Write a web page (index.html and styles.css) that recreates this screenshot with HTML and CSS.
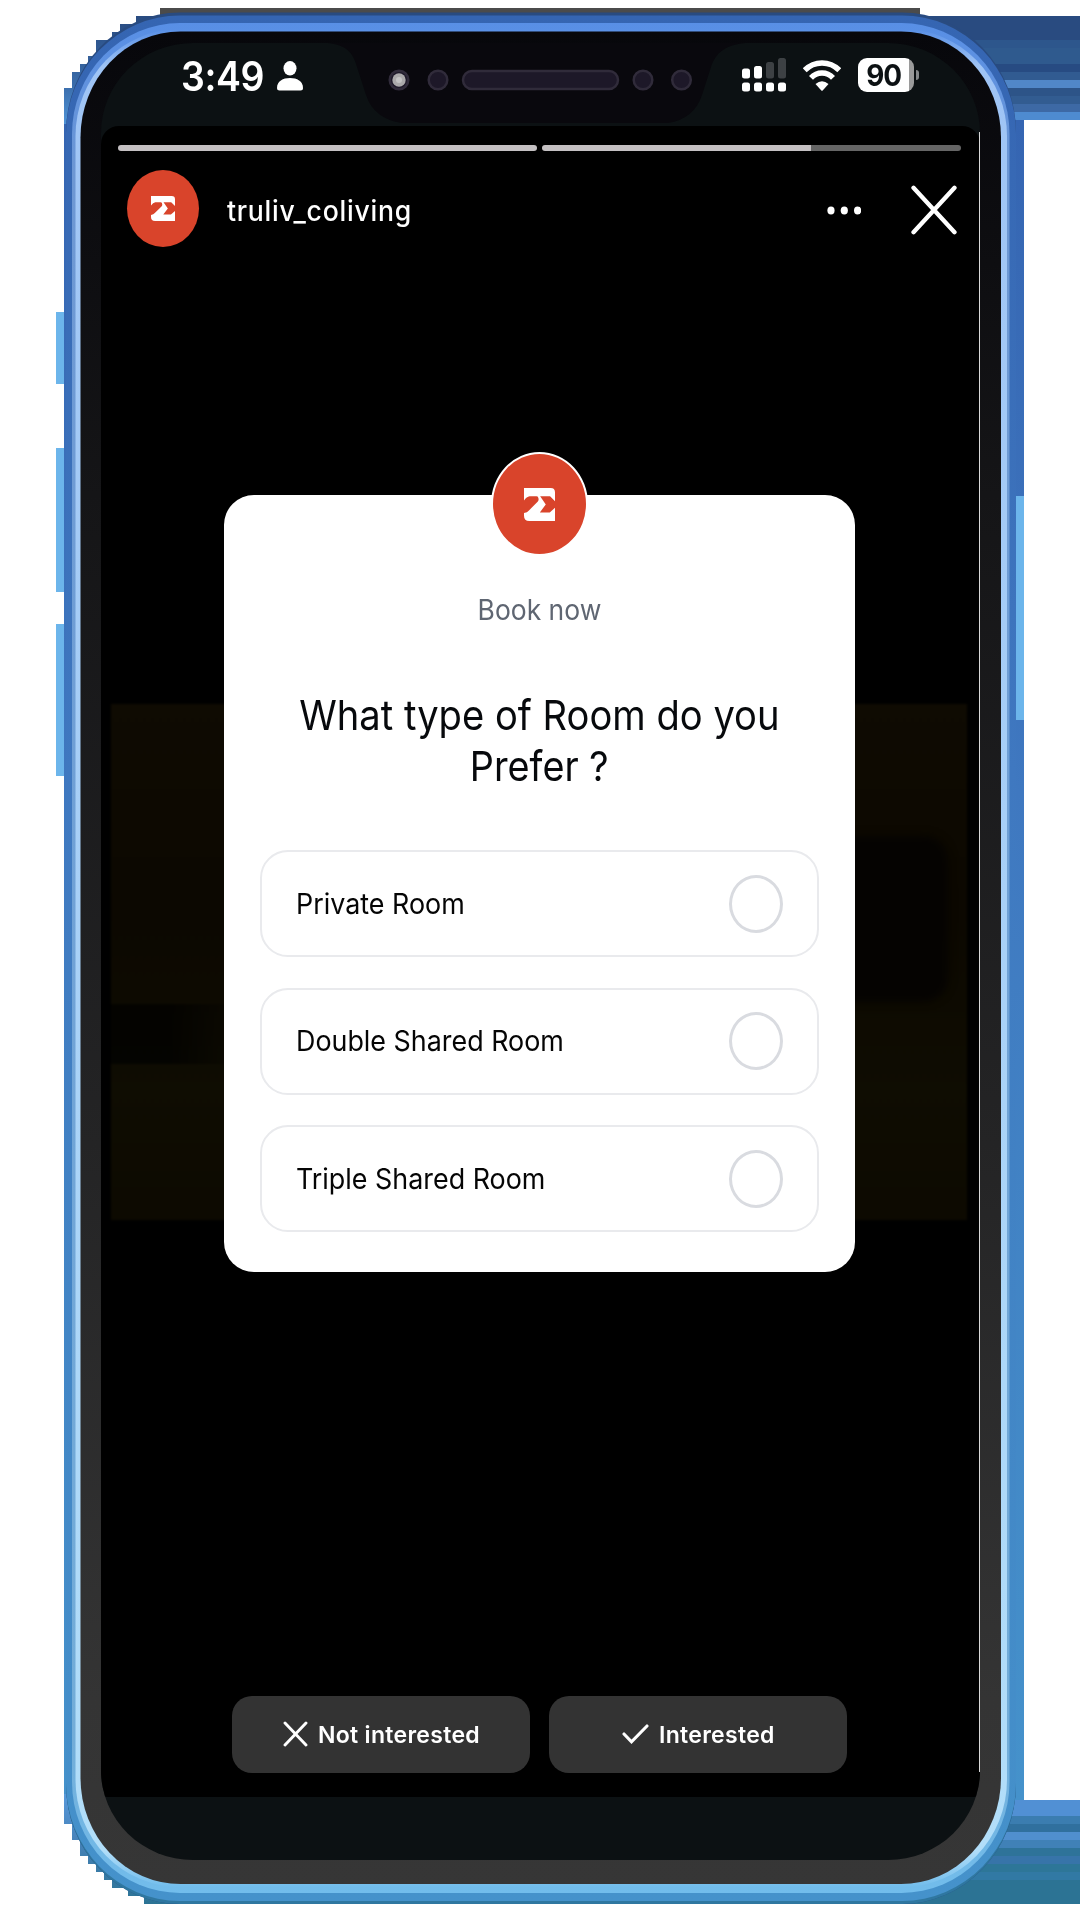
FILE: index.html
```html
<!DOCTYPE html>
<html lang="en">
<head>
<meta charset="utf-8">
<title>truliv_coliving story</title>
<link rel="stylesheet" href="styles.css">
</head>
<body>
<svg width="0" height="0" class="defs">
  <symbol id="mark" viewBox="0 0 94 100" preserveAspectRatio="none">
    <path d="M0 0H81Q94 0 94 13V40L79 25H49L66 50L48 74H78L94 60V100H16Q0 100 0 84V76Q10 74 15 68L42 41Q46 36 43 29Q42 25 38 25H17Q8 26 0 38Z" fill="#fff"/>
  </symbol>
</svg>
<main class="stage">
  <svg class="device" viewBox="0 0 1080 1920" aria-hidden="true">
    <defs>
      <linearGradient id="frame" x2="0" y2="1"><stop offset="0" stop-color="#3565b2"/><stop offset=".4" stop-color="#3f78c0"/><stop offset="1" stop-color="#4592cb"/></linearGradient>
      <linearGradient id="rim" x2="0" y2="1"><stop offset="0" stop-color="#588fe6"/><stop offset=".08" stop-color="#6d97d3"/><stop offset=".92" stop-color="#73add8"/><stop offset="1" stop-color="#72bdec"/></linearGradient>
      <linearGradient id="light" x2="0" y2="1"><stop offset="0" stop-color="#588fe6"/><stop offset=".02" stop-color="#9fc4f5"/><stop offset=".98" stop-color="#b2def9"/><stop offset="1" stop-color="#72bdec"/></linearGradient>
      <linearGradient id="glass" x2="0" y2="1"><stop offset="0" stop-color="#07070b"/><stop offset=".25" stop-color="#151517"/><stop offset=".6" stop-color="#242425"/><stop offset=".9" stop-color="#343434"/><stop offset="1" stop-color="#363636"/></linearGradient>
      <linearGradient id="step" x2="0" y2="1"><stop offset="0" stop-color="#294b80"/><stop offset=".6" stop-color="#3a6caa"/><stop offset="1" stop-color="#539ade"/></linearGradient>
      <linearGradient id="stepb" x2="0" y2="1"><stop offset="0" stop-color="#5e9fe4"/><stop offset=".5" stop-color="#4682b8"/><stop offset="1" stop-color="#2c7394"/></linearGradient>
    </defs>
    <g shape-rendering="crispEdges">
      <path fill="#4b4b4b" d="M160 8H920V20H160z"/>
      <path fill="#294b80" d="M900 16H1080V40H900z"/>
      <path fill="#2d568c" d="M900 40H1080V48H900z"/>
      <path fill="#2f5a8e" d="M900 48H1080V64H900z"/>
      <path fill="#274b82" d="M900 64H1080V72H900z"/>
      <path fill="#315b91" d="M900 72H1080V80H900z"/>
      <path fill="#5187c8" d="M990 80H1080V88H990z"/>
      <path fill="#2d5488" d="M990 88H1080V96H990z"/>
      <path fill="#325c91" d="M990 96H1080V104H990z"/>
      <path fill="#3d69a5" d="M990 104H1080V112H990z"/>
      <path fill="#4e8bd0" d="M990 112H1080V120H990z"/>
      <path fill="#5190d4" d="M990 1800H1080V1816H990z"/>
      <path fill="#3b7db0" d="M990 1816H1080V1824H990z"/>
      <path fill="#30709e" d="M990 1824H1080V1832H990z"/>
      <path fill="#508fce" d="M990 1832H1080V1840H990z"/>
      <path fill="#4081b7" d="M980 1840H1080V1848H980z"/>
      <path fill="#2e7399" d="M960 1848H1080V1856H960z"/>
      <path fill="#3774a9" d="M960 1856H1080V1864H960z"/>
      <path fill="#2d7698" d="M900 1864H1080V1872H900z"/>
      <path fill="#3179a4" d="M900 1872H1080V1880H900z"/>
      <path fill="#2c7394" d="M900 1880H1080V1904H900z"/>
      <path fill="url(#step)" d="M200 16H136V24H120V32H112V40H96V56H88V64H80V72H72V88H64V130H200z"/>
      <path fill="url(#stepb)" d="M64 1780V1824H72V1840H80V1856H88V1864H96V1872H104V1880H112V1888H128V1896H144V1904H220V1780z"/>
      <path fill="#6cb5eb" d="M56 312H66V384H56zM56 448H66V592H56zM56 624H66V776H56z"/>
      <path fill="url(#frame)" d="M64 124H90V1794H64zM990 120H1024V1800H990z"/>
      <path fill="#6cb5eb" d="M1016 496H1024V720H1016z"/>
    </g>
    <rect x="66" y="12.500" width="950" height="1891.500" rx="114" ry="120" fill="#294b80"/>
    <rect x="66" y="1400" width="950" height="504" rx="114" ry="120" fill="#2f77a0"/>
    <rect x="66" y="15.500" width="950" height="1885.500" rx="114" ry="118" fill="url(#frame)"/>
    <rect x="72" y="23" width="937.500" height="1870" rx="108" ry="111" fill="url(#rim)"/>
    <rect x="75.500" y="29" width="931.500" height="1858" rx="104" ry="107" fill="url(#light)"/>
    <rect x="80.500" y="31.500" width="920.500" height="1852.500" rx="100" ry="106" fill="url(#glass)"/>
    <path fill="#6cb5eb" d="M1016 497H1024V719H1018L1016 717z"/>
  </svg>

  <section class="screen">
    <header class="status">
      <svg class="notch" viewBox="0 0 417 83" aria-hidden="true">
        <path d="M0 0C18 2 25 9 29 24L38 52Q46 76 74 80H340Q366 76 374 52L383 24C388 9 398 2 417 0Z" fill="#09080d"/>
        <g fill="#1d1828" stroke="#302b3a" stroke-width="2.500">
          <circle cx="71" cy="37" r="9.300"/><circle cx="110" cy="37" r="9.300"/>
          <rect x="135" y="28" width="155" height="18" rx="9"/>
          <circle cx="315" cy="37" r="9.300"/><circle cx="353.500" cy="37" r="9.300"/>
        </g>
        <circle cx="71" cy="37" r="6.700" fill="#aaa9aa"/><circle cx="71" cy="37" r="3" fill="#c4c4c4"/>
      </svg>
      <div class="clock">
        <span class="time">3:49</span>
        <svg width="26" height="30" viewBox="0 0 26 30"><ellipse cx="13" cy="7.300" rx="6.500" ry="7.300" fill="#fff"/><path d="M0 27C0 20 6 17 13 17S26 20 26 27Q26 29.500 23.500 29.500H2.500Q0 29.500 0 27Z" fill="#fff"/></svg>
      </div>
      <div class="signals">
        <svg width="45" height="34" viewBox="0 0 45 34">
          <g fill="#fff"><rect y="10.500" width="8" height="10" rx="2.500"/><rect x="12" y="8" width="8" height="12.500" rx="2.500"/><rect y="24.500" width="8" height="9" rx="2.500"/><rect x="12" y="24.500" width="8" height="9" rx="2.500"/><rect x="24" y="24.500" width="8" height="9" rx="2.500"/><rect x="36" y="24.500" width="8" height="9" rx="2.500"/></g>
          <g fill="#3d4144"><rect x="24" y="4" width="8" height="16.500" rx="2.500"/><rect x="36" y="0" width="8" height="20.500" rx="2.500"/></g>
        </svg>
        <svg class="wifi" width="38" height="31" viewBox="0 0 38 31"><g fill="none" stroke="#fff" stroke-width="5.500"><path d="M1.700 10.300Q9 3 19 3T36.300 10.300"/><path d="M8 17.800Q12.500 13 19 13T30 17.800"/></g><path d="M12.500 24Q19 18.500 25.500 24L19.700 30.400Q19 31 18.300 30.400Z" fill="#fff"/></svg>
        <div class="battery"><span class="charge">90</span></div>
      </div>
    </header>

    <article class="story">
      <div class="progress"><i class="seg full"></i><i class="seg part"></i></div>
      <div class="account">
        <div class="avatar"><svg width="24" height="25"><use href="#mark"/></svg></div>
        <span class="handle">truliv_coliving</span>
        <svg class="more" width="34" height="9" viewBox="0 0 34 9" fill="#fff"><ellipse cx="4" cy="4.500" rx="3.600" ry="4"/><ellipse cx="17.300" cy="4.500" rx="3.600" ry="4"/><ellipse cx="30.600" cy="4.500" rx="3.600" ry="4"/></svg>
        <svg class="close" width="46" height="50" viewBox="0 0 46 50"><path d="M2.500 2.800L43.500 47.200M43.500 2.800L2.500 47.200" stroke="#fff" stroke-width="4.300" stroke-linecap="round"/></svg>
      </div>
      <div class="photo"></div>
      <div class="card">
        <div class="badge"><svg width="31" height="33"><use href="#mark"/></svg></div>
        <p class="kicker"><span>Book now</span></p>
        <h1 class="question"><span>What type of Room do you</span><span class="second">Prefer ?</span></h1>
        <div class="options">
          <div class="option"><span class="label">Private Room</span><i class="radio"></i></div>
          <div class="option"><span class="label">Double Shared Room</span><i class="radio"></i></div>
          <div class="option"><span class="label">Triple Shared Room</span><i class="radio"></i></div>
        </div>
      </div>
      <div class="actions">
        <div class="action"><svg width="25" height="26" viewBox="0 0 25 26"><path d="M2 2L23 24M23 2L2 24" stroke="#fff" stroke-width="2.900" stroke-linecap="round"/></svg><span>Not interested</span></div>
        <div class="action yes"><svg width="27" height="20" viewBox="0 0 27 20"><path d="M2 10L9.500 17.800L25 2" fill="none" stroke="#fff" stroke-width="3.100" stroke-linecap="round"/></svg><span>Interested</span></div>
      </div>
    </article>
  </section>
</main>
</body>
</html>
```
FILE: styles.css
```css
* { box-sizing: border-box; margin: 0; padding: 0; }
body { background: #fff; font-family: Inter, "Liberation Sans", sans-serif; color: #fff; }
.defs { position: absolute; }
.stage { position: relative; width: 1080px; height: 1920px; padding: 43px 100px 60px 101px; overflow: hidden; }
.device { position: absolute; inset: 0; width: 1080px; height: 1920px; }

.screen { position: relative; width: 879px; height: 1817px; display: flex; flex-direction: column; background: #0c1113; border-radius: 92px / 90px; overflow: hidden; }
.status { position: relative; height: 83px; display: flex; justify-content: space-between; padding: 15px 66px 0 80px; }
.notch { position: absolute; left: 227px; top: 0; width: 417px; height: 83px; }
.clock { display: flex; gap: 13px; padding-top: 3px; }
.time { width: 83px; font-size: 40.500px; line-height: 32px; font-weight: 600; letter-spacing: -.4px; white-space: nowrap; transform: scaleX(.925); transform-origin: 0 50%; }
.signals { display: flex; }
.wifi { margin: 2px 17px 0 16px; }
.battery { position: relative; width: 56px; height: 34px; border-radius: 9px; background: linear-gradient(90deg, #fff 51px, #9a9a9a 51px); padding-right: 4px; text-align: center; color: #0c1113; }
.battery::after { content: ""; position: absolute; left: 58px; top: 12px; width: 3px; height: 10px; border-radius: 0 3px 3px 0; background: #85888a; }
.charge { display: inline-block; font-size: 30px; line-height: 34px; font-weight: 700; letter-spacing: -1.200px; transform: scaleX(.93); }

.story { position: relative; height: 1671px; display: flex; flex-direction: column; background: #000; border-radius: 18px 18px 6px 6px; }
.story::after { content: ""; position: absolute; right: 0; top: 6px; width: 1px; height: 1640px; background: #d8d8d8; }
.progress { display: flex; gap: 5px; padding: 19px 19px 0 17px; height: 25px; }
.seg { flex: 1; border-radius: 3px; }
.full { background: #c4c0c2; }
.part { background: linear-gradient(90deg, #c4c0c2 269px, #656565 269px); }
.account { height: 77px; margin: 18.500px 23px 0 26px; display: flex; align-items: center; }
.avatar, .badge { display: flex; align-items: center; justify-content: center; border-radius: 50%; background: #d9442b; }
.avatar { width: 72px; height: 77px; }
.handle { flex: 1; margin: 6px 0 0 27.500px; font-size: 28px; line-height: 34px; font-weight: 500; letter-spacing: .8px; transform: scaleX(.95); transform-origin: 0 50%; }
.more { margin: 4px 50px 0 0; }
.close { margin-top: 4px; }
.photo { position: absolute; left: 10px; top: 578px; width: 856px; height: 516px; background: linear-gradient(90deg, rgba(0,0,0,.7) 60px, transparent 140px) 0 300px / 300px 60px no-repeat, linear-gradient(#0f0b02, #0c0801 40%, #0f0d02 75%, #0d0a01); filter: blur(1px); }
.photo::before { content: ""; position: absolute; left: 700px; top: 132px; width: 137px; height: 166px; border-radius: 24px; background: #050301; filter: blur(5px); }

.card { position: relative; width: 631px; height: 776.500px; margin: 248.500px 0 0 123px; border-radius: 30px; background: #fff; display: flex; flex-direction: column; align-items: center; }
.badge { width: 97px; height: 104px; margin-top: -43px; border: 2px solid #fff; }
.kicker { margin-top: 36px; font-size: 28px; line-height: 36px; color: #5f6672; white-space: nowrap; }
.kicker span { display: inline-block; transform: scaleX(.945); }
.question { margin-top: 61.500px; display: flex; flex-direction: column; align-items: center; font-size: 41.500px; line-height: 51.500px; font-weight: 400; color: #07090c; white-space: nowrap; }
.question span { transform: scaleX(.919); }
.question .second { transform: scaleX(.91); }
.options { display: flex; flex-direction: column; gap: 30.500px; margin-top: 57.500px; }
.option { width: 559px; height: 107px; display: flex; align-items: center; justify-content: space-between; padding: 0 34px; border: 2px solid #e9eaed; border-radius: 28px; color: #050505; }
.label { font-size: 28.500px; line-height: 34px; transform: scaleX(.943); transform-origin: 0 50%; white-space: nowrap; }
.radio { width: 54px; height: 58px; border: 3px solid #d9dbe0; border-radius: 50%; }

.actions { display: flex; gap: 19px; margin: 424px 0 0 131px; }
.action { width: 298px; height: 77px; display: flex; align-items: center; gap: 10px; padding-left: 51px; border-radius: 20px; background: #333; font-size: 23.500px; font-weight: 600; white-space: nowrap; }
.action span { letter-spacing: .3px; transform: scaleX(.98); transform-origin: 0 50%; }
.yes { padding-left: 73px; }
```
